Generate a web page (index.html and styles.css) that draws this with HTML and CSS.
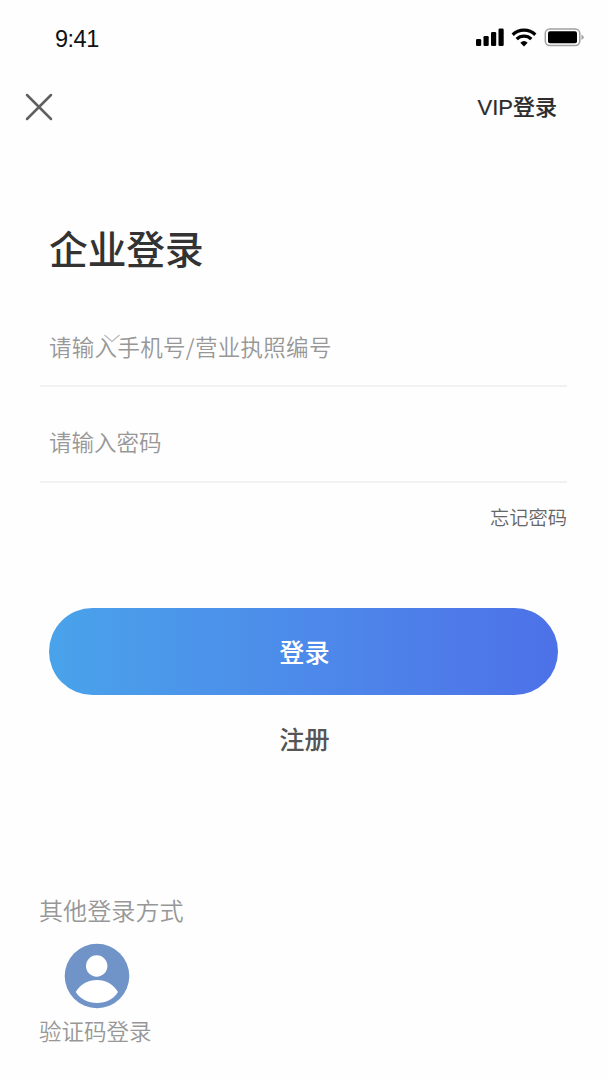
FILE: index.html
```html
<!DOCTYPE html>
<html lang="zh-CN">
<head>
    <meta charset="UTF-8">
    <meta name="viewport" content="width=device-width, initial-scale=1.0">
    <title>企业登录</title>
    <link rel="stylesheet" href="styles.css">
</head>
<body>
    <div class="status-bar">
        <span class="time">9:41</span>
        <svg class="status-icons" width="110" height="24" viewBox="0 0 110 24">
            <!-- signal -->
            <rect x="1" y="13" width="5.2" height="7" rx="1.3"/>
            <rect x="8.500" y="10" width="5.2" height="10" rx="1.3"/>
            <rect x="16" y="6" width="5.2" height="14" rx="1.3"/>
            <rect x="23.500" y="2.5" width="5.2" height="17.5" rx="1.3"/>
            <!-- wifi -->
            <g fill="none" stroke="#000" stroke-width="3.3">
                <path d="M37.700 8.7a16.4 16.4 0 0 1 22.6 0"/>
                <path d="M41.700 13.1a10.5 10.5 0 0 1 14.6 0"/>
            </g>
            <path d="M45.3 16.7a5.6 5.6 0 0 1 7.4 0L49 20.4z"/>
            <!-- battery -->
            <rect x="70.300" y="2.9" width="34.500" height="16.6" rx="4.4" fill="none" stroke="#a0a0a0" stroke-width="1.5"/>
            <rect x="73" y="5.2" width="29" height="12" rx="2"/>
            <path d="M106.500 8.4q2.2 1 2.2 2.8t-2.2 2.8z" fill="#a0a0a0"/>
        </svg>
    </div>

    <div class="nav">
        <svg class="close" width="28" height="28" viewBox="0 0 28 28">
            <path d="M2 2L26 26M26 2L2 26" fill="none" stroke="#606060" stroke-width="2.5" stroke-linecap="round"/>
        </svg>
        <a class="vip">VIP登录</a>
    </div>

    <h1>企业登录</h1>

    <form class="login-form">
        <div class="field">
            <input type="text" placeholder="请输入手机号/营业执照编号">
            <svg class="arrow" width="18" height="9" viewBox="0 0 18 9">
                <path d="M1.5 1L9 7.5L16.5 1" fill="none" stroke="#b8b8b8" stroke-width="1.2"/>
            </svg>
        </div>
        <div class="field">
            <input type="password" placeholder="请输入密码">
        </div>
        <a class="forgot">忘记密码</a>
        <button type="button" class="login-btn">登录</button>
        <a class="register">注册</a>
    </form>

    <div class="other">
        <p class="other-title">其他登录方式</p>
        <div class="other-item">
            <svg class="avatar" width="66" height="66" viewBox="0 0 66 66">
                <circle cx="33" cy="33" r="32.3" fill="#7094c8"/>
                <circle cx="32.7" cy="23" r="10.7" fill="#fff"/>
                <path d="M11.7 49C16.5 41 24 37 33 37S49 41 54 49C49 56.5 42 60 33 60S17 56.5 11.7 49z" fill="#fff"/>
            </svg>
            <span>验证码登录</span>
        </div>
    </div>
</body>
</html>
```
FILE: styles.css
```css
* {
    box-sizing: border-box;
}
body {
    margin: 0;
    height: 1080px;
    background-color: #fefefe;
    font-family: "Noto Sans CJK SC", sans-serif;
    color: #333;
    display: flex;
    flex-direction: column;
    overflow: hidden;
}

/* status bar */
.status-bar {
    height: 76px;
    padding: 0 22px 0 55px;
    display: flex;
    align-items: center;
    justify-content: space-between;
}
.time {
    font-family: "Liberation Sans", Arial, sans-serif;
    font-size: 23.5px;
    letter-spacing: -0.5px;
    color: #111;
    padding-top: 2px;
}

/* top navigation */
.nav {
    height: 62px;
    padding: 0 50px 0 25px;
    display: flex;
    align-items: center;
    justify-content: space-between;
}
.vip {
    font-family: "Liberation Sans", "Noto Sans CJK SC", sans-serif;
    font-size: 22px;
    font-weight: 500;
    color: #2c2c2c;
    padding-bottom: 4px;
    -webkit-text-stroke: 0.2px #2c2c2c;
}

h1 {
    margin: 80px 0 0 49px;
    height: 58px;
    line-height: 58px;
    font-size: 38.7px;
    font-weight: 500;
}

/* form */
.login-form {
    margin: 33px 40px 0;
    display: flex;
    flex-direction: column;
}
.field {
    position: relative;
    height: 96px;
    padding: 17px 9px 0;
    border-bottom: 2px solid #f1f1f1;
}
.field:first-child {
    height: 78px;
    padding-top: 0;
}
.field input {
    display: block;
    width: 100%;
    height: 74px;
    border: 0;
    padding: 0;
    outline: none;
    background: transparent;
    font-family: inherit;
    font-size: 22.5px;
    font-weight: 350;
}
.field:first-child input {
    height: 73px;
    letter-spacing: 0.3px;
}
.field input::placeholder {
    color: #979797;
}
.arrow {
    position: absolute;
    left: 63px;
    top: 25px;
}
.forgot {
    margin-top: 20px;
    line-height: 28px;
    align-self: flex-end;
    font-size: 19.3px;
    font-weight: 350;
    color: #666;
}
.login-btn {
    margin: 77px 9px 0;
    height: 87px;
    border: 0;
    border-radius: 44px;
    background: linear-gradient(90deg, #49a3ea, #4d8aea 50%, #4d71e8);
    color: #fff;
    font-family: inherit;
    font-size: 25.2px;
    font-weight: 500;
    padding: 0 0 2px 2px;
}
.register {
    margin-top: 24px;
    padding-left: 2px;
    line-height: 38px;
    text-align: center;
    font-size: 25.2px;
    font-weight: 500;
    color: #555;
}

/* other login methods */
.other {
    margin: 135px 0 0 39px;
    color: #979797;
    font-weight: 350;
}
.other-title {
    margin: 0;
    line-height: 36px;
    font-size: 24.1px;
}
.other-item {
    width: 116px;
    margin-top: 15px;
    display: flex;
    flex-direction: column;
    align-items: center;
}
.other-item span {
    align-self: flex-start;
    margin-top: 3px;
    line-height: 36px;
    font-size: 22.5px;
    white-space: nowrap;
}
```
